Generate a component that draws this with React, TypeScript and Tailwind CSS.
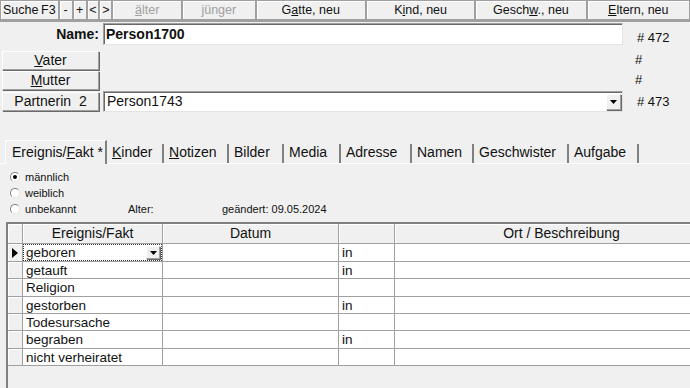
import React from "react";

const raised =
  "border border-t-white border-l-white border-r-[#a0a0a0] border-b-[#a0a0a0] shadow-[1px_1px_0_#696969]";
const sunken =
  "border border-t-[#a0a0a0] border-l-[#a0a0a0] border-r-[#e3e3e3] border-b-[#e3e3e3] shadow-[inset_1px_1px_0_#696969]";

function ToolBtn({ className, children }: { className: string; children: React.ReactNode }) {
  return (
    <div
      className={`h-[20px] flex items-center justify-center border border-[#a0a0a0] shadow-[inset_1px_1px_0_#fff] text-[12.5px] ${className}`}
    >
      {children}
    </div>
  );
}

function DropBtn({ className }: { className: string }) {
  return (
    <div className={`flex items-center justify-center bg-[#f0f0f0] ${raised} ${className}`}>
      <svg width="7" height="4" viewBox="0 0 7 4">
        <path d="M0 0h7L3.5 4z" fill="#000" />
      </svg>
    </div>
  );
}

function Radio({ checked }: { checked?: boolean }) {
  return (
    <span className="w-[10px] h-[10px] rounded-full bg-white border border-t-[#808080] border-l-[#808080] border-r-[#e3e3e3] border-b-[#e3e3e3] flex items-center justify-center">
      {checked && <span className="w-[4px] h-[4px] rounded-full bg-black" />}
    </span>
  );
}

const tabs: { label: React.ReactNode; w: string }[] = [
  { label: <><u>K</u>inder</>, w: "w-[57px]" },
  { label: <><u>N</u>otizen</>, w: "w-[65px]" },
  { label: <>Bilder</>, w: "w-[55px]" },
  { label: <>Media</>, w: "w-[57px]" },
  { label: <>Adresse</>, w: "w-[71px]" },
  { label: <>Namen</>, w: "w-[62px]" },
  { label: <>Geschwister</>, w: "w-[95px]" },
  { label: <>Aufgabe</>, w: "w-[70px]" },
];

const rows = [
  { name: "geboren", inn: true, h: "h-[18px]" },
  { name: "getauft", inn: true, h: "h-[17px]" },
  { name: "Religion", inn: false, h: "h-[18px]" },
  { name: "gestorben", inn: true, h: "h-[17px]" },
  { name: "Todesursache", inn: false, h: "h-[17px]" },
  { name: "begraben", inn: true, h: "h-[18px]" },
  { name: "nicht verheiratet", inn: false, h: "h-[17px]" },
];

export default function App() {
  return (
    <div className="w-[690px] h-[388px] overflow-hidden bg-[#f0f0f0] text-[#111] font-['Liberation_Sans',Arial,sans-serif]">
      {/* toolbar */}
      <div className="flex h-[22px] border-b-2 border-[#a0a0a0]">
        <ToolBtn className="w-[59px] justify-between! px-[2px]">
          <span>Suche</span>
          <span>F3</span>
        </ToolBtn>
        <ToolBtn className="w-[14px]">-</ToolBtn>
        <ToolBtn className="w-[14px]">+</ToolBtn>
        <ToolBtn className="w-[13px]">&lt;</ToolBtn>
        <ToolBtn className="w-[13px]">&gt;</ToolBtn>
        <ToolBtn className="w-[70px] text-[#a0a0a0]">
          <span>
            <u>ä</u>lter
          </span>
        </ToolBtn>
        <ToolBtn className="w-[74px] text-[#a0a0a0]">jünger</ToolBtn>
        <ToolBtn className="w-[111px]">
          <span>
            G<u>a</u>tte, neu
          </span>
        </ToolBtn>
        <ToolBtn className="w-[110px]">
          <span>
            K<u>i</u>nd, neu
          </span>
        </ToolBtn>
        <ToolBtn className="w-[112px]">
          <span>
            Gesch<u>w</u>., neu
          </span>
        </ToolBtn>
        <ToolBtn className="w-[104px]">
          <span>
            <u>E</u>ltern, neu
          </span>
        </ToolBtn>
      </div>

      {/* name */}
      <div className="flex items-end mt-[1px] h-[22px]">
        <div className="w-[99px] text-right font-bold text-[14px] self-center">Name:</div>
        <div className={`ml-[4px] w-[520px] h-[22px] bg-white ${sunken} flex items-center px-[2px] font-bold text-[14px]`}>
          Person1700
        </div>
        <div className="ml-[14px] text-[13px] leading-none mb-[1px]"># 472</div>
      </div>

      {/* parents */}
      <div className="flex items-center h-[20px] mt-[5px]">
        <div className={`ml-[2px] w-[97px] h-[19px] ${raised} flex items-center justify-center text-[14px]`}>
          <span>
            <u>V</u>ater
          </span>
        </div>
        <div className="ml-[536px] text-[13px]">#</div>
      </div>
      <div className="flex items-center h-[20px]">
        <div className={`ml-[2px] w-[97px] h-[19px] ${raised} flex items-center justify-center text-[14px]`}>
          <span>
            <u>M</u>utter
          </span>
        </div>
        <div className="ml-[536px] text-[13px]">#</div>
      </div>
      <div className="flex items-center h-[21px] mt-[1px]">
        <div className={`ml-[2px] w-[97px] h-[19px] ${raised} flex items-center justify-center text-[14px]`}>
          Partnerin&nbsp; 2
        </div>
        <div className={`ml-[4px] w-[520px] h-[21px] bg-white ${sunken} flex items-center pl-[3px] pr-[1px] text-[14px]`}>
          <span className="flex-1">Person1743</span>
          <DropBtn className="w-[15px] h-[16px]" />
        </div>
        <div className="ml-[14px] text-[13px]"># 473</div>
      </div>

      {/* tabs */}
      <div className="mt-[28px] flex items-end h-[24px] border-b border-white pl-[5px] text-[14px]">
        <div className="w-[102px] h-[24px] -mb-px bg-[#f0f0f0] border-l border-t border-white border-r-2 border-r-[#808080] flex items-center pl-[6px] pb-[1px]">
          <span>
            Ereignis/<u>F</u>akt *
          </span>
        </div>
        {tabs.map((t, i) => (
          <div
            key={i}
            className={`${t.w} h-[19px] border-r-2 border-[#808080] flex items-center pl-[5px] pb-[2px]`}
          >
            <span>{t.label}</span>
          </div>
        ))}
      </div>

      {/* sex */}
      <div className="mt-[7px] pl-[10px] text-[11px] flex flex-col gap-[4px] leading-[12px]">
        <div className="flex items-center gap-[5px]">
          <Radio checked />
          <span>männlich</span>
        </div>
        <div className="flex items-center gap-[5px]">
          <Radio />
          <span>weiblich</span>
        </div>
        <div className="flex items-center">
          <Radio />
          <span className="ml-[5px] w-[103px]">unbekannt</span>
          <span className="w-[94px]">Alter:</span>
          <span>geändert: 09.05.2024</span>
        </div>
      </div>

      {/* grid */}
      <div className="mt-[7px] ml-[6px] w-[722px] h-[170px] border-l-2 border-t-2 border-[#808080]">
        <div className="flex h-[20px] bg-[#f0f0f0] border-b border-[#a0a0a0] text-[14px]">
          <div className="w-[15px] border-r border-[#a0a0a0] shadow-[inset_1px_1px_0_#fff]" />
          <div className="w-[140px] border-r border-[#a0a0a0] shadow-[inset_1px_1px_0_#fff] flex items-center justify-center">
            Ereignis/Fakt
          </div>
          <div className="w-[176px] border-r border-[#a0a0a0] shadow-[inset_1px_1px_0_#fff] flex items-center justify-center">
            Datum
          </div>
          <div className="w-[56px] border-r border-[#a0a0a0] shadow-[inset_1px_1px_0_#fff]" />
          <div className="flex-1 shadow-[inset_1px_1px_0_#fff] flex items-center justify-center">
            Ort / Beschreibung
          </div>
        </div>
        {rows.map((r, i) => (
          <div key={i} className={`flex ${r.h} border-b border-[#a0a0a0] text-[13.5px]`}>
            <div className="w-[15px] bg-[#f0f0f0] border-r border-[#a0a0a0] shadow-[inset_1px_1px_0_#fff] flex items-center justify-center">
              {i === 0 && (
                <svg width="6" height="10" viewBox="0 0 6 10">
                  <path d="M0 0L6 5L0 10z" fill="#000" />
                </svg>
              )}
            </div>
            <div className="w-[140px] bg-white border-r border-[#a0a0a0] flex items-center">
              {i === 0 ? (
                <div className="w-full h-full border border-dotted border-[#333] flex items-center pl-[2px] pr-[1px]">
                  <span className="flex-1 leading-none pt-[1px]">{r.name}</span>
                  <DropBtn className="w-[14px] h-[13px]" />
                </div>
              ) : (
                <span className="pl-[3px] leading-none pt-[1px]">{r.name}</span>
              )}
            </div>
            <div className="w-[176px] bg-white border-r border-[#a0a0a0]" />
            <div className="w-[56px] bg-white border-r border-[#a0a0a0] flex items-center pl-[3px] leading-none pt-[1px]">
              {r.inn ? "in" : ""}
            </div>
            <div className="flex-1 bg-white" />
          </div>
        ))}
      </div>
    </div>
  );
}
